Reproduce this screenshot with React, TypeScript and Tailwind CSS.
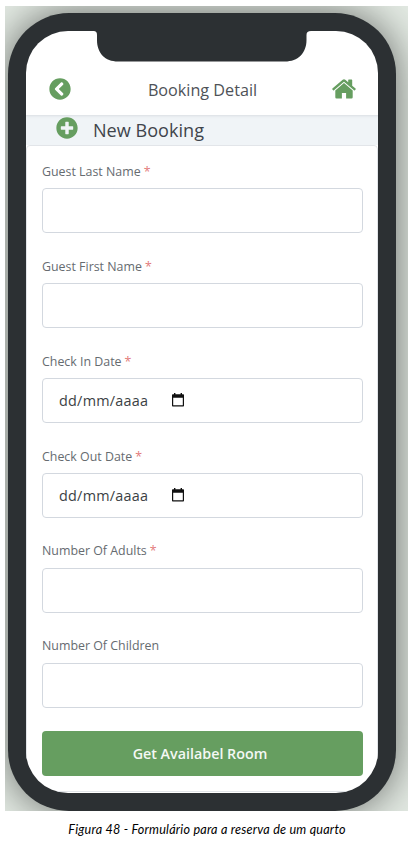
import { FaChevronCircleLeft, FaPlusCircle } from "react-icons/fa";

type FieldProps = { label: string; required?: boolean; date?: boolean };

const fields: FieldProps[] = [
  { label: "Guest Last Name", required: true },
  { label: "Guest First Name", required: true },
  { label: "Check In Date", required: true, date: true },
  { label: "Check Out Date", required: true, date: true },
  { label: "Number Of Adults", required: true },
  { label: "Number Of Children" },
];

function CalendarIcon() {
  return (
    <svg width="12" height="14" viewBox="0 0 12 14" className="mb-[1px] ml-[24px]">
      <path
        fill="#111"
        fillRule="evenodd"
        d="M2 0h1.4v1.2h5.2V0H10v1.2h1c.6 0 1 .4 1 1V12.4c0 .6-.4 1-1 1H1c-.6 0-1-.4-1-1V2.2c0-.6.4-1 1-1h1zM1.2 4.7v7.5h9.6V4.7z"
      />
    </svg>
  );
}

function HomeIcon() {
  return (
    <svg width="24" height="20" viewBox="0 0 24 20" fill="#669e60" className="mb-[2px]">
      <path d="M12 3.900L20.700 11.400V18.300Q20.700 19.500 19.500 19.500H14.100V14H9.900V19.500H4.500Q3.300 19.500 3.300 18.300V11.400Z" />
      <path d="M12 0.300Q12.700 0.300 13.300 0.800L16.200 3.300V1.100Q16.200 0.500 16.800 0.500H19.600Q20.200 0.500 20.200 1.100V6.700L23.600 9.600Q24 10 23.600 10.500L22.900 11.300Q22.500 11.700 22 11.300L12 2.800L2 11.300Q1.500 11.700 1.100 11.300L0.400 10.500Q0 10 0.400 9.600L10.700 0.800Q11.300 0.300 12 0.300Z" />
    </svg>
  );
}

function Field({ label, required, date }: FieldProps) {
  return (
    <div className="h-[94.85px] shrink-0">
      <div className="flex h-[27px] items-start pt-[2.6px] text-[12.4px] leading-[16px] text-[#666b70]">
        <span className="whitespace-pre">{label}</span>
        {required && <span className="ml-[3px] text-[#e37b7b]">*</span>}
      </div>
      <div className="flex h-[45px] items-center rounded-[4px] border border-[#d3d8df] bg-white pl-4 text-[14.4px] text-[#3b3f44]">
        {date && (
          <>
            <span className="w-[89px] tracking-[0.25px]">dd/mm/aaaa</span>
            <CalendarIcon />
          </>
        )}
      </div>
    </div>
  );
}

export default function App() {
  return (
    <div className="h-[844px] w-[419px] overflow-hidden bg-white font-['Open_Sans','Noto_Sans',sans-serif]">
      <div className="mt-[6px] ml-[5px] h-[805px] w-[403px] overflow-hidden bg-[#e3eae3] pt-[7px] pl-[3px]">
        <div className="h-[798px] w-[388px] rounded-[61px] bg-[#2c3033] p-[18px] shadow-[0_0_42px_rgba(0,0,0,0.55)]">
          <div className="relative flex h-[762px] w-[352px] flex-col overflow-hidden rounded-[42px] bg-white">
            <svg className="absolute top-0 left-[67px]" width="218" height="31" viewBox="0 0 218 31">
              <path
                fill="#2c3033"
                d="M0 0H218C215 0 213.500 1 213.500 4V9C213.500 22 205 30.500 192 30.500H25C12 30.500 4 22 4 9V4C4 1 3 0 0 0Z"
              />
            </svg>
            <header className="flex h-[84px] shrink-0 items-end justify-between pr-[22px] pb-[14px] pl-[23px]">
              <FaChevronCircleLeft className="mb-[1px] size-[22px] text-[#669e60]" />
              <h1 className="ml-[2px] text-[16.2px] leading-[22px] font-normal text-[#4e5257]">Booking Detail</h1>
              <HomeIcon />
            </header>
            <div className="flex h-[30px] shrink-0 items-start bg-[#f0f4f7] pt-[2px] pl-[30px] shadow-[inset_0_3px_3px_-2px_#d9dee2]">
              <FaPlusCircle className="size-[22px] text-[#669e60]" />
              <span className="ml-[15px] text-[18.1px] leading-[27px] text-[#3f444b]">New Booking</span>
            </div>
            <main className="flex h-[647px] shrink-0 flex-col rounded-t-[4px] border border-[#e2e5e9] pt-[15.4px] pr-[14px] pl-[15px]">
              {fields.map((field) => (
                <Field key={field.label} {...field} />
              ))}
              <button className="mt-[0.5px] h-[45px] w-full shrink-0 rounded-[4px] bg-[#669e60] pr-[5px] text-[14.3px] font-semibold text-[#f4f8f4]">
                Get Availabel Room
              </button>
            </main>
          </div>
        </div>
      </div>
      <p className="pt-[10px] pr-[5px] text-center font-['Lato',sans-serif] text-[12.6px] leading-[18px] tracking-[0.22px] text-black italic">
        Figura 48 - Formulário para a reserva de um quarto
      </p>
    </div>
  );
}
